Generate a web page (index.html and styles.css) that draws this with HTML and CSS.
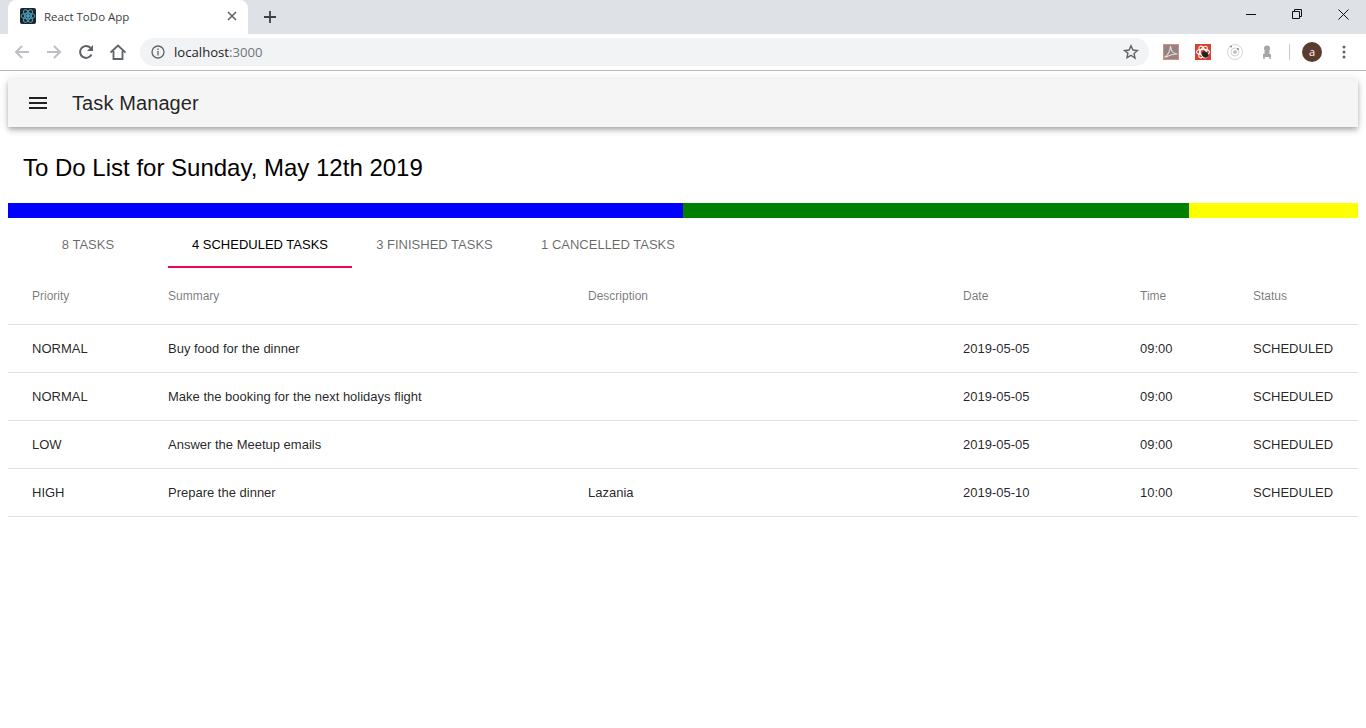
FILE: index.html
```html
<!DOCTYPE html>
<html lang="en">
<head>
    <meta charset="UTF-8">
    <title>React ToDo App</title>
    <link rel="stylesheet" href="styles.css">
</head>
<body>
    <div class="browser">
        <div class="tabstrip">
            <div class="tab">
                <span class="favicon">
                    <svg width="16" height="16" viewBox="0 0 16 16" fill="none" stroke="#4aa3bb" stroke-width="1">
                        <ellipse cx="8" cy="8" rx="7" ry="2.8"/>
                        <ellipse cx="8" cy="8" rx="7" ry="2.8" transform="rotate(60 8 8)"/>
                        <ellipse cx="8" cy="8" rx="7" ry="2.8" transform="rotate(120 8 8)"/>
                        <circle cx="8" cy="8" r="1.4" fill="#4aa3bb"/>
                    </svg>
                </span>
                <span class="tab-title">React ToDo App</span>
                <svg class="tab-close" width="10" height="10" viewBox="0 0 10 10" stroke="#5f6368" stroke-width="1.6">
                    <path d="M1 1l8 8M9 1l-8 8"/>
                </svg>
            </div>
            <svg class="new-tab" width="12" height="12" viewBox="0 0 12 12" stroke="#3c4043" stroke-width="1.8">
                <path d="M6 0v12M0 6h12"/>
            </svg>
            <div class="window-btns">
                <svg width="10" height="10" viewBox="0 0 10 10" stroke="#111" fill="none"><path d="M0 5.5h10"/></svg>
                <svg width="10" height="10" viewBox="0 0 10 10" stroke="#111" fill="none"><path d="M.5 2.5h7v7h-7zM2.5 2.5v-2h7v7h-2"/></svg>
                <svg width="11" height="11" viewBox="0 0 11 11" stroke="#111" fill="none"><path d="M.5.5l10 10M10.500.5l-10 10"/></svg>
            </div>
        </div>
        <div class="toolbar">
            <svg class="nav-icon" width="16" height="16" viewBox="0 0 16 16" fill="none" stroke="#bdc1c6" stroke-width="2"><path d="M15 8H2M8 2L2 8l6 6"/></svg>
            <svg class="nav-icon" width="16" height="16" viewBox="0 0 16 16" fill="none" stroke="#bdc1c6" stroke-width="2"><path d="M1 8h13M8 2l6 6-6 6"/></svg>
            <svg class="nav-icon" width="16" height="16" viewBox="0 0 16 16" fill="none" stroke="#5f6368" stroke-width="2"><path d="M13.500 10.500A6 6 0 1 1 12.500 3.800"/><path d="M15 1v6H9z" fill="#5f6368" stroke="none"/></svg>
            <svg class="nav-icon" width="16" height="16" viewBox="0 0 16 16" fill="none" stroke="#5f6368" stroke-width="1.8"><path d="M.5 8.500L8 1.500l7.500 7M3.500 7v8h9V7"/></svg>
            <div class="omnibox">
                <svg width="14" height="14" viewBox="0 0 14 14" fill="none" stroke="#5f6368" stroke-width="1.3"><circle cx="7" cy="7" r="6"/><path d="M7 6v4.500M7 3.500v1.500"/></svg>
                <span class="url">localhost<span class="url-port">:3000</span></span>
                <svg class="star" width="16" height="16" viewBox="0 0 16 16" fill="none" stroke="#5f6368" stroke-width="1.4"><path d="M8 1.800l1.900 4.200 4.600.5-3.400 3.100.9 4.500L8 11.300l-4 2.300.9-4.500L1.500 6.500l4.600-.5z"/></svg>
            </div>
            <div class="extensions">
                <span class="ext ext-pdf">
                    <svg width="16" height="16" viewBox="0 0 16 16" fill="none" stroke="#f0d8d4" stroke-width="1.1"><path d="M2 13c3-2 5-6 5.500-11 .5 5 3 8 7 8-4 0-8 1-11 3z"/></svg>
                </span>
                <span class="ext ext-red">
                    <svg width="16" height="16" viewBox="0 0 16 16" fill="none" stroke="#fff" stroke-width="1.1">
                        <ellipse cx="8" cy="8" rx="6.500" ry="2.800"/>
                        <ellipse cx="8" cy="8" rx="6.500" ry="2.800" transform="rotate(60 8 8)"/>
                        <ellipse cx="8" cy="8" rx="6.500" ry="2.800" transform="rotate(120 8 8)"/>
                        <ellipse cx="10" cy="10.500" rx="3.500" ry="2.800" fill="#222" stroke="none" transform="rotate(40 10 10.500)"/>
                    </svg>
                </span>
                <svg class="ext" width="16" height="16" viewBox="0 0 16 16" fill="none" stroke="#d4d4d4" stroke-width="1"><circle cx="8" cy="8" r="7.500"/><circle cx="8" cy="8" r="4"/><circle cx="8" cy="8" r="1.800" fill="#bbb"/><circle cx="4" cy="2.500" r="1" fill="#888" stroke="none"/><circle cx="11" cy="5" r="1" fill="#888" stroke="none"/></svg>
                <svg class="ext" width="16" height="16" viewBox="0 0 16 16" fill="#a6a6a6"><circle cx="8" cy="4.500" r="3"/><rect x="5.500" y="7" width="5" height="3"/><rect x="4" y="10" width="8" height="3"/><circle cx="5" cy="14" r="1"/><circle cx="11" cy="14" r="1"/></svg>
                <span class="toolbar-sep"></span>
                <span class="avatar">a</span>
                <svg class="kebab" width="4" height="14" viewBox="0 0 4 14" fill="#5f6368"><circle cx="2" cy="2" r="1.500"/><circle cx="2" cy="7" r="1.500"/><circle cx="2" cy="12" r="1.500"/></svg>
            </div>
        </div>
    </div>

    <div class="page">
        <header class="appbar">
            <svg class="menu-icon" width="18" height="12" viewBox="0 0 18 12" fill="#212121"><rect width="18" height="2"/><rect y="5" width="18" height="2"/><rect y="10" width="18" height="2"/></svg>
            <span class="app-title">Task Manager</span>
        </header>

        <h1 class="list-title">To Do List for Sunday, May 12th 2019</h1>

        <div class="progress">
            <div class="progress-part progress-blue"></div>
            <div class="progress-part progress-green"></div>
            <div class="progress-part progress-yellow"></div>
        </div>

        <div class="tabs">
            <div class="task-tab tab-all">8 TASKS</div>
            <div class="task-tab tab-scheduled active">4 SCHEDULED TASKS</div>
            <div class="task-tab tab-finished">3 FINISHED TASKS</div>
            <div class="task-tab tab-cancelled">1 CANCELLED TASKS</div>
        </div>

        <table class="tasks">
            <colgroup>
                <col class="col-priority">
                <col class="col-summary">
                <col class="col-description">
                <col class="col-date">
                <col class="col-time">
                <col class="col-status">
            </colgroup>
            <thead>
                <tr>
                    <th>Priority</th>
                    <th>Summary</th>
                    <th>Description</th>
                    <th>Date</th>
                    <th>Time</th>
                    <th>Status</th>
                </tr>
            </thead>
            <tbody>
                <tr>
                    <td>NORMAL</td>
                    <td>Buy food for the dinner</td>
                    <td></td>
                    <td>2019-05-05</td>
                    <td>09:00</td>
                    <td>SCHEDULED</td>
                </tr>
                <tr>
                    <td>NORMAL</td>
                    <td>Make the booking for the next holidays flight</td>
                    <td></td>
                    <td>2019-05-05</td>
                    <td>09:00</td>
                    <td>SCHEDULED</td>
                </tr>
                <tr>
                    <td>LOW</td>
                    <td>Answer the Meetup emails</td>
                    <td></td>
                    <td>2019-05-05</td>
                    <td>09:00</td>
                    <td>SCHEDULED</td>
                </tr>
                <tr>
                    <td>HIGH</td>
                    <td>Prepare the dinner</td>
                    <td>Lazania</td>
                    <td>2019-05-10</td>
                    <td>10:00</td>
                    <td>SCHEDULED</td>
                </tr>
            </tbody>
        </table>
    </div>
</body>
</html>
```
FILE: styles.css
```css
html, body {
    margin: 0;
    padding: 0;
    background-color: #fff;
}

body {
    font-family: "Liberation Sans", Arial, sans-serif;
    overflow: hidden;
}

.browser {
    height: 71px;
}

.tabstrip {
    height: 34px;
    background-color: #dee1e6;
    display: flex;
    align-items: center;
    padding-left: 8px;
}

.tab {
    width: 240px;
    height: 34px;
    box-sizing: border-box;
    background-color: #fff;
    border-radius: 8px 8px 0 0;
    display: flex;
    align-items: center;
    padding: 0 11px 2px 12px;
}

.favicon {
    width: 16px;
    height: 16px;
    background-color: #20232a;
    border-radius: 2px;
    display: flex;
    align-items: center;
    justify-content: center;
}

.tab-title {
    font-family: "Open Sans", "Liberation Sans", sans-serif;
    font-size: 11.5px;
    color: #3c4043;
    margin-left: 8px;
    flex: 1;
}

.new-tab {
    margin-left: 16px;
}

.window-btns {
    margin-left: auto;
    display: flex;
    align-items: center;
    gap: 36px;
    padding-right: 17px;
    padding-bottom: 6px;
}

.toolbar {
    height: 36px;
    border-bottom: 1px solid #b9babb;
    display: flex;
    align-items: center;
    padding-left: 14px;
}

.nav-icon {
    margin-right: 16px;
}

.omnibox {
    width: 1009px;
    height: 28px;
    margin-left: -2px;
    background-color: #f1f3f4;
    border-radius: 14px;
    display: flex;
    align-items: center;
    padding: 0 10px 0 11px;
    box-sizing: border-box;
}

.url {
    font-family: "Open Sans", "Liberation Sans", sans-serif;
    font-size: 13.15px;
    color: #202124;
    margin-left: 9px;
}

.url-port {
    color: #70757a;
}

.star {
    margin-left: auto;
}

.extensions {
    display: flex;
    align-items: center;
    margin-left: 14px;
    gap: 16px;
}

.ext {
    width: 16px;
    height: 16px;
    display: block;
}

.ext-pdf {
    background-color: #8f8584;
    outline: 1px solid #e08a7e;
    outline-offset: -1px;
}

.ext-red {
    background-color: #d8402f;
}

.toolbar-sep {
    width: 1px;
    height: 16px;
    background-color: #c8c8c8;
    margin-left: -2px;
}

.avatar {
    width: 20px;
    height: 20px;
    margin-left: -4px;
    border-radius: 50%;
    background-color: #5d3a2e;
    color: #fff;
    font-family: "Open Sans", "Liberation Sans", sans-serif;
    font-size: 11px;
    line-height: 19px;
    text-align: center;
}

.kebab {
    margin-left: 4px;
}

/* page */
.page {
    padding: 8px 8px 0;
}

.appbar {
    height: 48px;
    background-color: #f5f5f5;
    box-shadow: 0 2px 4px -1px rgba(0, 0, 0, 0.2), 0 4px 5px 0 rgba(0, 0, 0, 0.14), 0 1px 10px 0 rgba(0, 0, 0, 0.12);
    display: flex;
    align-items: center;
    padding-left: 21px;
}

.app-title {
    font-size: 20px;
    letter-spacing: 0.1px;
    color: rgba(0, 0, 0, 0.87);
    margin-left: 25px;
}

.list-title {
    font-size: 24px;
    font-weight: 400;
    line-height: 32px;
    color: #000;
    margin: 25px 0 19px 15px;
}

.progress {
    display: flex;
    height: 15px;
}

.progress-part {
    height: 100%;
}

.progress-blue {
    width: 50%;
    background-color: #00f;
}

.progress-green {
    width: 37.5%;
    background-color: #008000;
}

.progress-yellow {
    width: 12.5%;
    background-color: #ff0;
}

.tabs {
    display: flex;
    height: 48px;
    margin-top: 2px;
}

.task-tab {
    font-size: 13px;
    line-height: 50px;
    text-align: center;
    color: rgba(0, 0, 0, 0.6);
    box-sizing: border-box;
    height: 48px;
}

.tab-all { width: 160px; }
.tab-scheduled { width: 184px; }
.tab-finished { width: 165px; }
.tab-cancelled { width: 182px; }

.task-tab.active {
    color: #000;
    border-bottom: 2px solid #f50057;
}

.tasks {
    width: 1350px;
    table-layout: fixed;
    border-collapse: collapse;
}

.col-priority { width: 160px; }
.col-summary { width: 420px; }
.col-description { width: 375px; }
.col-date { width: 177px; }
.col-time { width: 113px; }
.col-status { width: 105px; }

.tasks th {
    height: 56px;
    font-size: 12px;
    font-weight: 400;
    text-align: left;
    color: rgba(0, 0, 0, 0.54);
    border-bottom: 1px solid #e0e0e0;
    padding: 0;
}

.tasks td {
    height: 47px;
    font-size: 13px;
    color: rgba(0, 0, 0, 0.87);
    border-bottom: 1px solid #e0e0e0;
    padding: 0;
    white-space: nowrap;
}

.tasks th:first-child,
.tasks td:first-child {
    padding-left: 24px;
}
```
